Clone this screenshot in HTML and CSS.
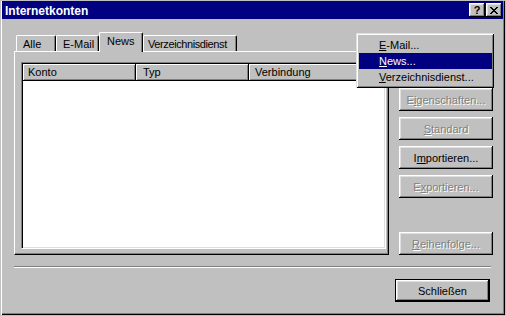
FILE: index.html
```html
<!DOCTYPE html>
<html lang="de">
<head>
    <meta charset="UTF-8">
    <title>Internetkonten</title>
    <link rel="stylesheet" href="styles.css">
</head>
<body>
    <div class="window">
        <!-- Titelleiste -->
        <div class="titlebar">
            <span class="title">Internetkonten</span>
            <button class="tbtn help">?</button>
            <button class="tbtn close">
                <svg width="8" height="7" viewBox="0 0 8 7">
                    <path d="M0 0h2v1h1v1h2v-1h1v-1h2v1h-1v1h-1v1h-1v1h1v1h1v1h1v1h-2v-1h-1v-1h-2v1h-1v1h-2v-1h1v-1h1v-1h1v-1h-1v-1h-1v-1h-1z" fill="#000"/>
                </svg>
            </button>
        </div>

        <div class="content">
            <div class="main">
                <!-- Registerkarten -->
                <div class="tabbox">
                    <div class="tabs">
                        <div class="tab tab-alle">Alle</div>
                        <div class="tab tab-mail">E-Mail</div>
                        <div class="tab tab-news active">News</div>
                        <div class="tab tab-verz">Verzeichnisdienst</div>
                    </div>
                    <div class="panel">
                        <div class="list">
                            <div class="list-head">
                                <div class="hcell col-konto">Konto</div>
                                <div class="hcell col-typ">Typ</div>
                                <div class="hcell col-verb">Verbindung</div>
                            </div>
                        </div>
                    </div>
                </div>

                <!-- Schaltflächen rechts -->
                <div class="side">
                    <button class="btn hidden">Hinzufügen</button>
                    <button class="btn hidden">Entfernen</button>
                    <button class="btn disabled">E<u>i</u>genschaften...</button>
                    <button class="btn disabled"><u>S</u>tandard</button>
                    <button class="btn">I<u>m</u>portieren...</button>
                    <button class="btn disabled">E<u>x</u>portieren...</button>
                    <button class="btn disabled bottom"><u>R</u>eihenfolge...</button>
                </div>
            </div>

            <div class="sep"></div>

            <div class="footer">
                <button class="btn default">Schließen</button>
            </div>
        </div>

        <!-- Kontextmenü "Hinzufügen" -->
        <ul class="menu">
            <li><u>E</u>-Mail...</li>
            <li class="selected"><u>N</u>ews...</li>
            <li><u>V</u>erzeichnisdienst...</li>
        </ul>
    </div>
</body>
</html>
```

FILE: styles.css
```css
/* Grundlagen */
* {
    box-sizing: border-box;
}
body {
    margin: 0;
    background: #c0c0c0;
    font-family: "Liberation Sans", Arial, sans-serif;
    font-size: 11px;
    color: #000;
}

/* Fensterrahmen */
.window {
    position: relative;
    width: 505px;
    height: 314px;
    background: #c0c0c0;
    box-shadow: inset 1px 0 #c0c0c0, inset 2px 0 #fff, inset -1px -1px #000, inset -2px -2px #808080;
}

/* Titelleiste */
.titlebar {
    display: flex;
    align-items: center;
    height: 18px;
    margin: 1px 2px 0 2px;
    padding: 0 1px 0 3px;
    background: #000080;
    color: #fff;
}
.title {
    flex: 1;
    font-weight: bold;
    font-size: 12px;
    padding-top: 1px;
}
.tbtn {
    width: 16px;
    height: 14px;
    padding: 0;
    border: none;
    background: #c0c0c0;
    box-shadow: inset -1px -1px #000, inset 1px 1px #fff, inset -2px -2px #808080, inset 2px 2px #dfdfdf;
    display: flex;
    align-items: center;
    justify-content: center;
    font-family: "Liberation Sans", Arial, sans-serif;
    font-weight: bold;
    font-size: 11px;
    line-height: 14px;
    color: #000;
}
.tbtn.close {
    margin-left: 1px;
}
.tbtn svg {
    display: block;
}

/* Inhalt */
.content {
    padding: 13px 12px 0 14px;
}
.main {
    display: flex;
    gap: 10px;
    height: 223px;
}

/* Registerkarten */
.tabbox {
    width: 375px;
    display: flex;
    flex-direction: column;
}
.tabs {
    display: flex;
    align-items: flex-end;
    height: 19px;
    padding-left: 2px;
    position: relative;
    z-index: 1;
}
.tab {
    height: 16px;
    padding: 2px 0 0 6px;
    line-height: 13px;
    border-top: 1px solid #fff;
    border-left: 1px solid #fff;
    border-right: 1px solid #000;
    border-radius: 2px 2px 0 0;
    box-shadow: inset -1px 0 #808080;
    white-space: nowrap;
    overflow: hidden;
}
.tab-alle { width: 40px; }
.tab-mail { width: 43px; }
.tab-news { width: 44px; padding-left: 7px; }
.tab-verz { width: 94px; padding-left: 4px; letter-spacing: -0.4px; }
.tab.active {
    height: 20px;
    margin-bottom: -1px;
    background: #c0c0c0;
}
.panel {
    flex: 1;
    border: 1px solid;
    border-color: #fff #000 #000 #fff;
    box-shadow: inset -1px -1px #808080;
    padding: 10px 0 0 6px;
}

/* Listenansicht */
.list {
    width: 365px;
    height: 187px;
    background: #fff;
    border: 1px solid;
    border-color: #808080 #fff #fff #808080;
    box-shadow: inset 1px 1px #000, inset -1px -1px #dfdfdf;
    padding: 1px;
}
.list-head {
    display: flex;
    height: 17px;
}
.hcell {
    background: #c0c0c0;
    box-shadow: inset -1px -1px #000, inset 1px 1px #fff, inset -2px -2px #808080;
    padding-left: 6px;
    line-height: 17px;
    white-space: nowrap;
}
.col-konto { width: 113px; padding-left: 5px; }
.col-typ { width: 113px; padding-left: 7px; }
.col-verb { flex: 1; }

/* Schaltflächen */
.side {
    width: 94px;
    display: flex;
    flex-direction: column;
    gap: 6px;
}
.side .btn:first-child {
    margin-top: -2px;
}
.btn {
    height: 23px;
    width: 94px;
    padding: 0;
    border: none;
    background: #c0c0c0;
    box-shadow: inset -1px -1px #000, inset 1px 1px #fff, inset -2px -2px #808080, inset 2px 2px #dfdfdf;
    font-family: "Liberation Sans", Arial, sans-serif;
    font-size: 11px;
    color: #000;
    white-space: nowrap;
}
.btn.hidden {
    visibility: hidden;
}
.btn.disabled {
    color: #808080;
    text-shadow: 1px 1px 0 #fff;
}
.btn.bottom {
    margin-top: auto;
}
.btn.default {
    width: 95px;
    border: 1px solid #000;
}

/* Trennlinie und Fußzeile */
.sep {
    margin: 11px 2px 0 0;
    border-top: 1px solid #808080;
    border-bottom: 1px solid #fff;
}
.footer {
    display: flex;
    justify-content: flex-end;
    margin-top: 11px;
    padding-right: 3px;
}

/* Menü */
.menu {
    position: absolute;
    left: 356px;
    top: 32px;
    width: 138px;
    height: 55px;
    margin: 0;
    padding: 4px 2px 3px 3px;
    list-style: none;
    background: #c0c0c0;
    box-shadow: inset 1px 1px #dfdfdf, inset -1px -1px #000, inset 2px 2px #fff, inset -2px -2px #808080;
    z-index: 5;
}
.menu li {
    height: 16px;
    line-height: 16px;
    padding-left: 20px;
    white-space: nowrap;
}
.menu li.selected {
    background: #000080;
    color: #fff;
}
```
